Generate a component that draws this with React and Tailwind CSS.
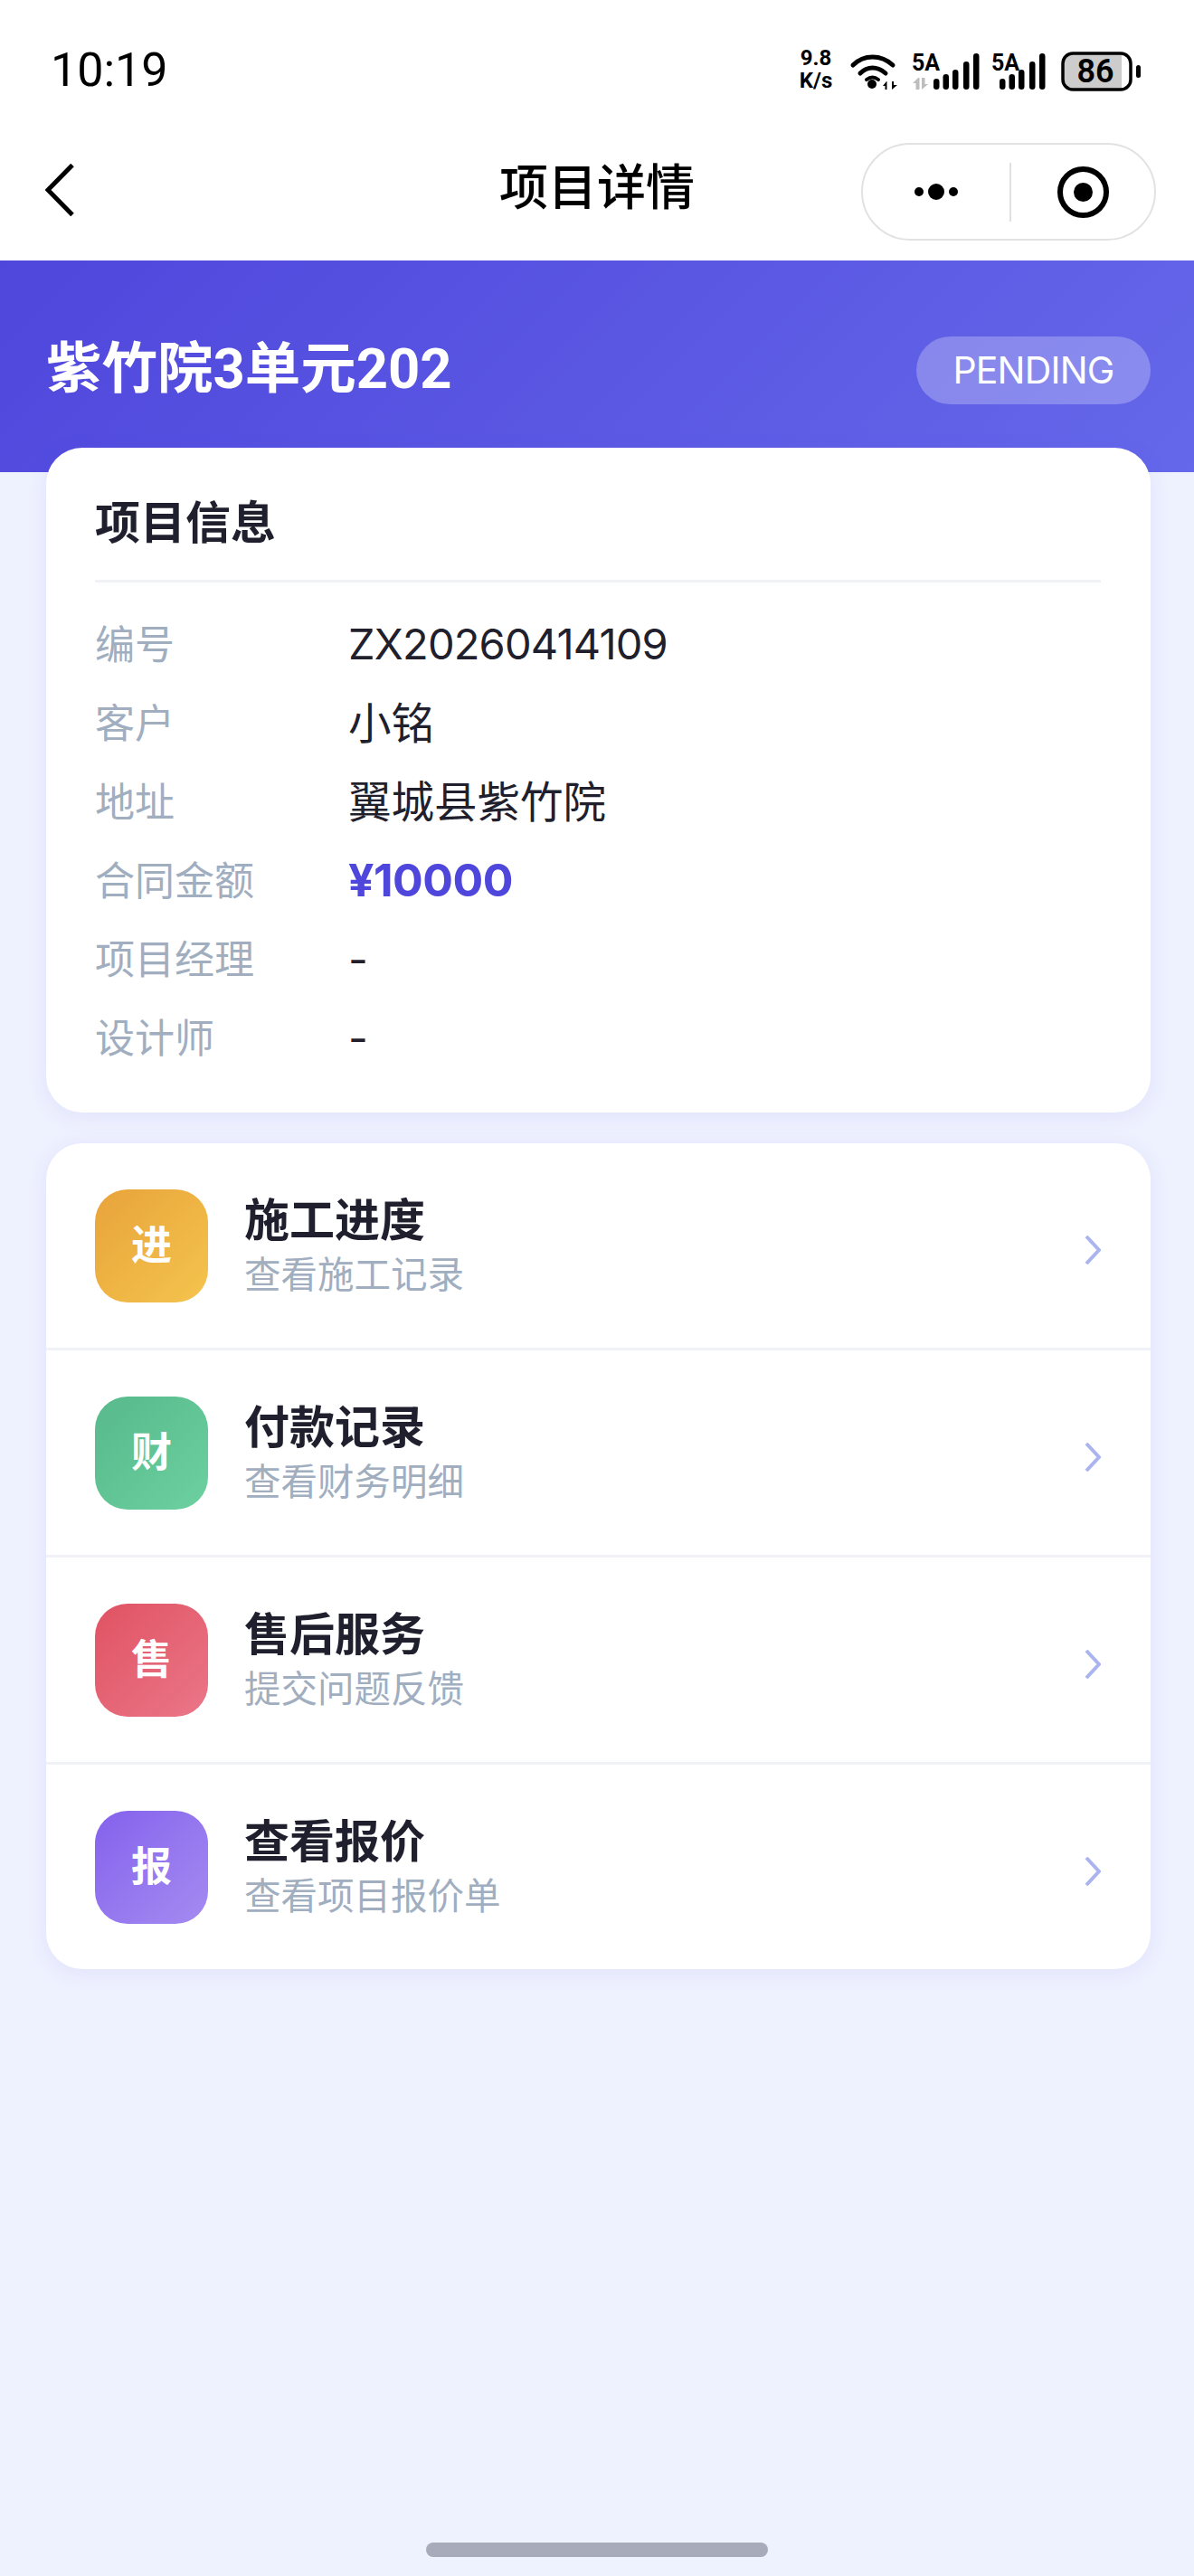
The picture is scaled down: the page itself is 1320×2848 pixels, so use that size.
const infoRows = [
  { label: '编号', value: 'ZX20260414109', code: true },
  { label: '客户', value: '小铭' },
  { label: '地址', value: '翼城县紫竹院' },
  { label: '合同金额', value: '¥10000', money: true },
  { label: '项目经理', value: '-' },
  { label: '设计师', value: '-' },
];

const menuRows = [
  { icon: '进', title: '施工进度', sub: '查看施工记录', bg: 'from-[#e8a33a] to-[#f4c44e]' },
  { icon: '财', title: '付款记录', sub: '查看财务明细', bg: 'from-[#57b98c] to-[#6cd09f]' },
  { icon: '售', title: '售后服务', sub: '提交问题反馈', bg: 'from-[#e05263] to-[#ea7688]' },
  { icon: '报', title: '查看报价', sub: '查看项目报价单', bg: 'from-[#8561ec] to-[#a58bf1]' },
];

function valueClass(row) {
  if (row.money) return 'text-[50px] font-bold tracking-[-0.5px] text-[#4f46dc]';
  if (row.code) return 'text-[47px] tracking-[-0.8px]';
  return 'text-[47.5px]';
}

function Wifi() {
  return (
    <svg width="54" height="44" viewBox="0 0 54 44" fill="none" className="ml-[17px]">
      <path d="M4 15C16 3 35 3 48 15" stroke="#000" strokeWidth="5" strokeLinecap="round" />
      <path d="M12 24C20 16 31 16 40 24" stroke="#000" strokeWidth="5" strokeLinecap="round" />
      <path d="M19 31C23 28 28 28 32 31" stroke="#000" strokeWidth="4" strokeLinecap="round" />
      <circle cx="25" cy="36" r="5" fill="#000" />
      <path d="M41 33L37 38H39.5V42H41.5V33ZM47 33V42L53 37H49V33Z" fill="#000" />
    </svg>
  );
}

function Signal({ left, gray, className }) {
  const bars = [
    { x: 0, top: 30 },
    { x: 10.5, top: 25 },
    { x: 21, top: 20 },
    { x: 33, top: 11 },
    { x: 44, top: 2 },
  ];
  return (
    <svg width={left + 51} height="50" viewBox={`0 -6 ${left + 51} 50`} fill="none" className={className}>
      <text x="0" y="21" fontFamily="Roboto" fontWeight="700" fontSize="25" fill="#000">5A</text>
      {gray && <path d="M7 29L1 35H4.5V42H8.5V29ZM11 29V42L18 36H14.5V29Z" fill="#bdbdbd" />}
      {bars.map((b) => (
        <rect key={b.x} x={left + b.x} y={b.top} width="6.5" height={42 - b.top} rx="3.2" fill="#000" />
      ))}
    </svg>
  );
}

function Battery() {
  return (
    <svg width="88" height="44" viewBox="0 0 88 44" fill="none" className="ml-[17px]">
      <path d="M12 2H67V41H12C6 41 2 37 2 31V12C2 6 6 2 12 2Z" fill="#cccccc" />
      <rect x="2" y="2" width="75" height="40" rx="11" stroke="#000" strokeWidth="3.5" />
      <rect x="83" y="15" width="5" height="14" rx="2.5" fill="#000" />
      <text x="38" y="34" textAnchor="middle" fontFamily="Roboto" fontWeight="600" fontSize="36" fill="#000">86</text>
    </svg>
  );
}

export default function App() {
  return (
    <div className="flex min-h-[2848px] flex-col bg-[#eef1fe] text-[#1f1f2e] [font-family:Inter,'Noto_Sans_CJK_SC',sans-serif]">
      <div className="bg-white">
        {/* status bar */}
        <div className="flex h-[158px] items-start justify-between pt-[57px] pl-[56px] pr-[59px]">
          <span className="text-[52px] leading-[42px] text-black [font-family:Roboto,sans-serif]">10:19</span>
          <div className="flex items-start">
            <div className="mt-[-5px] w-[40px] text-center text-[24px] leading-[25px] font-bold text-black [font-family:Roboto,sans-serif]">
              <div>9.8</div>
              <div>K/s</div>
            </div>
            <Wifi />
            <Signal left={24} gray className="ml-[15px] mt-[-6px]" />
            <Signal left={9} className="ml-[13px] mt-[-6px]" />
            <Battery />
          </div>
        </div>

        {/* nav */}
        <div className="grid h-[130px] grid-cols-[1fr_auto_1fr] items-start px-[42px]">
          <div className="pl-[8px] pt-[23px]">
            <svg width="32" height="58" viewBox="0 0 32 58" fill="none">
              <path d="M30 1.5L3 29L30 56.5" stroke="#000" strokeWidth="5" />
            </svg>
          </div>
          <h1 className="pt-[14px] text-[54px] leading-[72px] font-medium text-black">项目详情</h1>
          <div className="flex justify-end">
            <div className="flex h-[108px] w-[326px] items-center rounded-full border-2 border-[#e2e2e2]">
              <div className="flex w-[162px] items-center justify-center gap-[5px]">
                <span className="size-[10px] rounded-full bg-black" />
                <span className="size-[18px] rounded-full bg-black" />
                <span className="size-[10px] rounded-full bg-black" />
              </div>
              <div className="h-[65px] w-[2px] bg-[#e0e0e0]" />
              <div className="flex flex-1 items-center justify-center">
                <div className="flex size-[57px] items-center justify-center rounded-full border-[6px] border-black">
                  <span className="size-[21px] rounded-full bg-black" />
                </div>
              </div>
            </div>
          </div>
        </div>
      </div>

      {/* banner */}
      <div className="flex h-[234px] items-start justify-between bg-[linear-gradient(135deg,#4f46dc,#6568ea)] pl-[51px] pr-[48px] pt-[84px]">
        <h2 className="mt-[-6px] text-[61.5px] leading-[84px] font-bold text-white [font-family:Roboto,'Noto_Sans_CJK_SC',sans-serif]">紫竹院3单元202</h2>
        <span className="flex h-[75px] w-[259px] items-center justify-center rounded-full bg-white/25 text-[41px] tracking-[-0.8px] text-white">PENDING</span>
      </div>

      {/* info card */}
      <div className="ml-[51px] mr-[48px] mt-[-27px] rounded-[40px] bg-white pb-[39px] pl-[54px] pr-[55px] pt-[50px] shadow-[0_4px_24px_rgba(79,70,229,0.08)]">
        <div className="border-b-[3px] border-[#f1f2f8] pb-[30px] text-[50px] leading-[66px] font-bold">项目信息</div>
        <div className="mt-[25px]">
          {infoRows.map((row) => (
            <div key={row.label} className="flex h-[87px] items-center">
              <span className="w-[280px] text-[44px] text-[#a0aec0]">{row.label}</span>
              <span className={valueClass(row)}>{row.value}</span>
            </div>
          ))}
        </div>
      </div>

      {/* menu card */}
      <div className="ml-[51px] mr-[48px] mt-[34px] overflow-hidden rounded-[40px] bg-white shadow-[0_4px_24px_rgba(79,70,229,0.08)]">
        {menuRows.map((row, i) => (
          <div key={row.title} className={i < 3 ? 'flex h-[229px] items-center border-b-[3px] border-[#f1f2f8] pl-[54px] pr-[55px]' : 'flex h-[226px] items-center pl-[54px] pr-[55px]'}>
            <div className={`flex size-[125px] items-center justify-center rounded-[36px] bg-gradient-to-br ${row.bg} text-[45px] font-bold text-white`}>
              {row.icon}
            </div>
            <div className="ml-[40px] flex-1">
              <div className="text-[50px] leading-[60px] font-bold">{row.title}</div>
              <div className="mt-[6px] text-[40.5px] leading-[50px] text-[#a0aec0]">{row.sub}</div>
            </div>
            <svg width="18" height="32" viewBox="0 0 18 32" fill="none" className="mt-[10px]">
              <path d="M2 1L16 16L2 31" stroke="#aab4ee" strokeWidth="4" />
            </svg>
          </div>
        ))}
      </div>

      <div className="mx-auto mb-[21px] mt-auto h-[16px] w-[378px] rounded-full bg-[#a8abba]" />
    </div>
  );
}
